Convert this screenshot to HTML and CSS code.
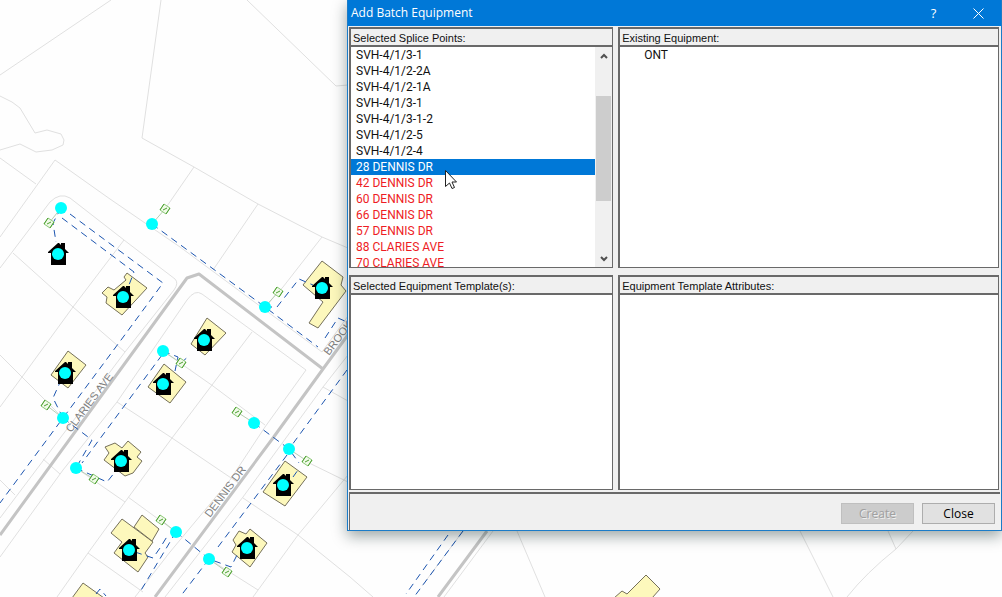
FILE: index.html
```html
<!DOCTYPE html>
<html lang="en">
<head>
<meta charset="utf-8">
<title>Add Batch Equipment</title>
<link rel="stylesheet" href="styles.css">
</head>
<body>
<main class="desktop">
<svg class="map" viewBox="0 0 1002 597" preserveAspectRatio="xMinYMin slice" role="img" aria-label="Street map">
  <defs>
    <g id="home">
      <path class="home-body" d="M0-11 1-11 3-9V-11H7V-5L11-1H8V11H-7V-1H-10V-2Z"/>
      <circle class="node" r="6"/>
    </g>
    <circle id="node" class="node" r="6"/>
    <g id="tap" class="tap">
      <path d="M-1-5 5-1 1 5-5 1Z"/>
      <path class="tap-bar" d="M-1-5-5 1M5-1 1 5M-2 1 2-1"/>
    </g>
  </defs>

  <g class="parcels">
    <path d="M0 75 111 0M161 0 142 138 194 167 258 204 322 237 348 248M247 0 336 86 348 85"/>
    <path d="M0 96 12 102 20 108 35 133 47 130 61 134 64 140 63 145 52 150 36 152 20 144 0 150M0 158 36 184"/>
    <path d="M194 167 165 209M0 237 55 160 110 199 180 247 322 352 348 316"/>
    <path d="M0 268 50 202Q60 192 70 198L124 240 175 279Q179 283 174 290L125 352 0 518"/>
    <path d="M13 253 73 307 125 352M124 240 73 307 22 377 0 407M0 355 22 377 63 418"/>
    <path d="M0 557 63 470 117 402 187 300Q195 289 202 294L306 370 265 427 230 480 170 552 135 597"/>
    <path d="M252 332 172 438 125 502 88 553 57 597M117 402 172 438 240 484M163 351 213 386 265 425"/>
    <path d="M76 468 125 502M128 497 176 532M88 553 143 592M43 459 60 474M0 480 15 495"/>
    <path d="M258 204 213 270M322 237 283 287 265 307M348 355 323 387 243 497 165 597M323 387 348 401"/>
    <path d="M243 498 298 535 350 577 373 597M348 475 298 535 253 597M209 559 258 590M303 460 348 482"/>
    <path d="M517 531 545 597M800 531 833 597M888 531 896 549M913 531 896 549Q866 573 847 597M493 531 444 597M463 531 422 586"/>
  </g>

  <g class="roads">
    <path d="M0 535 187 278 199 274 323 369"/>
    <path d="M155 597 273 438 323 369 350 332M487 531 438 597"/>
  </g>

  <g class="buildings">
    <path d="M127 273 147 288 122 315 106 303 107 297 102 293 108 287 114 290 126 280 124 277Z"/>
    <path d="M322 261 343 277 341 285 346 291 318 328 309 323 323 302 303 285Z"/>
    <path d="M207 318 226 333 205 355 191 344Z"/>
    <path d="M68 351 86 365 68 388 51 375Z"/>
    <path d="M164 364 186 382 170 403 148 387Z"/>
    <path d="M128 441 141 452 137 457 142 461 133 473 125 476 104 460 109 453 105 447 115 443 122 448Z"/>
    <path d="M122 519 153 542 145 553 148 557 138 572 114 553 122 542 111 533Z"/>
    <path d="M142 515 159 529 152 541 134 527Z"/>
    <path d="M83 583 104 598 72 598Z"/>
    <path d="M285 461 307 477 285 506 263 492Z"/>
    <path d="M250 529 267 543 250 567 232 552 236 545 233 540 239 531 246 534Z"/>
    <path d="M646 575 660 589 652 598 614 598 622 591 627 594Z"/>
  </g>

  <g class="cables">
    <path d="M70 214 163 283 124 336 63 418 0 503"/>
    <path d="M62 218 134 272 129 285M61 208 53 223 56 242"/>
    <path d="M152 224 265 307 318 347M265 307 277 307 299 279 313 285"/>
    <path d="M325 338 338 318 347 322"/>
    <path d="M162 355 82 463M63 418 92 440 76 468M63 418 53 398 62 378M76 468 107 482 115 472"/>
    <path d="M163 351 178 357 175 371M181 363 190 355"/>
    <path d="M254 423 289 449 299 463M347 370 289 449M287 455 218 547"/>
    <path d="M176 532 209 559 231 567 237 555M209 559 180 597M176 532 140 592M135 552 153 558 160 548 168 535"/>
    <path d="M448 535 406 594M463 531 414 597M293 477 298 470M96 594 100 589 106 596"/>
  </g>

  <g class="drops">
    <path d="M61 208 49 223M152 224 165 209M265 307 278 292M163 351 181 363M63 418 46 405M76 468 94 479M254 423 237 412M289 449 307 461M176 532 161 520M209 559 227 572"/>
  </g>

  <g class="streets">
    <text transform="translate(71 433) rotate(-53)">CLARIES AVE</text>
    <text transform="translate(210 518) rotate(-53)">DENNIS DR</text>
    <text transform="translate(329 356) rotate(-53)">BROOK</text>
  </g>

  <use href="#tap" x="49" y="223"/><use href="#tap" x="165" y="209"/>
  <use href="#tap" x="278" y="292"/><use href="#tap" x="181" y="363"/>
  <use href="#tap" x="46" y="405"/><use href="#tap" x="94" y="479"/>
  <use href="#tap" x="237" y="412"/><use href="#tap" x="307" y="461"/>
  <use href="#tap" x="161" y="520"/><use href="#tap" x="227" y="572"/>

  <use href="#home" x="58" y="254"/><use href="#home" x="123" y="297"/>
  <use href="#home" x="322" y="288"/><use href="#home" x="204" y="340"/>
  <use href="#home" x="163" y="384"/><use href="#home" x="65" y="373"/>
  <use href="#home" x="121" y="461"/><use href="#home" x="129" y="550"/>
  <use href="#home" x="283" y="485"/><use href="#home" x="247" y="548"/>

  <use href="#node" x="61" y="208"/><use href="#node" x="152" y="224"/>
  <use href="#node" x="265" y="307"/><use href="#node" x="163" y="351"/>
  <use href="#node" x="63" y="418"/><use href="#node" x="76" y="468"/>
  <use href="#node" x="254" y="423"/><use href="#node" x="289" y="449"/>
  <use href="#node" x="176" y="532"/><use href="#node" x="209" y="559"/>
</svg>

<section class="dialog" role="dialog" aria-labelledby="dialog-title">
  <header class="titlebar">
    <h1 class="title" id="dialog-title">Add Batch Equipment</h1>
    <button class="caption-button" type="button" aria-label="Help">?</button>
    <button class="caption-button" type="button" aria-label="Close window">
      <svg class="cross" viewBox="0 0 11 11" aria-hidden="true"><path d="M.5.5 10.500 10.500M10.500.5.5 10.500"/></svg>
    </button>
  </header>

  <div class="panels">
    <section class="panel">
      <h2 class="panel-title" id="points-title">Selected Splice Points:</h2>
      <div class="scroller">
        <ul class="list" role="listbox" aria-labelledby="points-title" tabindex="0">
          <li class="item" role="option">SVH-4/1/3-1</li>
          <li class="item" role="option">SVH-4/1/2-2A</li>
          <li class="item" role="option">SVH-4/1/2-1A</li>
          <li class="item" role="option">SVH-4/1/3-1</li>
          <li class="item" role="option">SVH-4/1/3-1-2</li>
          <li class="item" role="option">SVH-4/1/2-5</li>
          <li class="item" role="option">SVH-4/1/2-4</li>
          <li class="item item-selected" role="option" aria-selected="true">28 DENNIS DR</li>
          <li class="item item-alert" role="option">42 DENNIS DR</li>
          <li class="item item-alert" role="option">60 DENNIS DR</li>
          <li class="item item-alert" role="option">66 DENNIS DR</li>
          <li class="item item-alert" role="option">57 DENNIS DR</li>
          <li class="item item-alert" role="option">88 CLARIES AVE</li>
          <li class="item item-alert" role="option">70 CLARIES AVE</li>
        </ul>
        <div class="scrollbar">
          <button class="arrow" type="button" aria-label="Scroll up"><svg class="chevron" viewBox="0 0 8 6" aria-hidden="true"><path d="M1 5 4 2 7 5"/></svg></button>
          <div class="track"><div class="thumb"></div></div>
          <button class="arrow" type="button" aria-label="Scroll down"><svg class="chevron" viewBox="0 0 8 6" aria-hidden="true"><path d="M1 1 4 4 7 1"/></svg></button>
        </div>
      </div>
    </section>
    <section class="panel">
      <h2 class="panel-title" id="existing-title">Existing Equipment:</h2>
      <ul class="list list-tree" role="listbox" aria-labelledby="existing-title" tabindex="0">
        <li class="item" role="option">ONT</li>
      </ul>
    </section>
    <section class="panel">
      <h2 class="panel-title">Selected Equipment Template(s):</h2>
      <div class="list"></div>
    </section>
    <section class="panel">
      <h2 class="panel-title">Equipment Template Attributes:</h2>
      <div class="list"></div>
    </section>
  </div>

  <footer class="actions">
    <button class="button" type="button" disabled>Create</button>
    <button class="button" type="button">Close</button>
  </footer>
</section>

<svg class="cursor" viewBox="0 0 12 19" aria-hidden="true"><path d="M.5.5V16.500L4.500 13 7 18.500 9.500 17.500 7 12H11.500Z"/></svg>
</main>
</body>
</html>
```

FILE: styles.css
```css
* {
  box-sizing: border-box;
}

body {
  margin: 0;
  font-family: Roboto, "Liberation Sans", sans-serif;
  font-size: 12px;
  line-height: 16px;
  color: #111;
}

.desktop {
  position: relative;
  height: 100vh;
  overflow: hidden;
  background: #fefefe;
}

/* Map */
.map {
  display: block;
  width: 100%;
  height: 100%;
}

.parcels,
.roads,
.cables,
.drops {
  fill: none;
}

.parcels {
  stroke: #e0e0e0;
}

.roads {
  stroke: #c4c4c4;
  stroke-width: 3px;
  stroke-linejoin: round;
}

.buildings {
  fill: #fdf8bc;
  stroke: #75705a;
}

.cables {
  stroke: #1c55b0;
  stroke-dasharray: 7 5;
}

.drops {
  stroke: #b9cdb4;
}

.streets {
  fill: #808080;
  font: 11px "Liberation Sans", sans-serif;
}

.home-body {
  fill: #000;
}

.node {
  fill: #00ffff;
}

.tap {
  fill: #f0fae8;
  stroke: #8cc878;
}

.tap-bar {
  stroke: #4ca030;
}

/* Dialog */
.dialog {
  position: absolute;
  top: 0;
  right: 0;
  left: 347px;
  border: 1px solid #1b7cc8;
  border-top: 0;
  background: #f0f0f0;
  box-shadow: 0 5px 14px rgba(0, 30, 30, 0.4);
}

.titlebar {
  display: flex;
  align-items: center;
  height: 26px;
  background: #0078d7;
  color: #fff;
}

.title {
  flex: 1;
  margin: 0;
  padding-left: 3px;
  font: 12px/26px "Open Sans", sans-serif;
}

.caption-button {
  display: grid;
  place-items: center;
  width: 45px;
  height: 26px;
  padding: 0;
  border: 0;
  background: transparent;
  color: inherit;
  font: 13px "Open Sans", sans-serif;
}

.cross {
  width: 11px;
  height: 11px;
  fill: none;
  stroke: #fff;
}

.panels {
  display: grid;
  grid-template-columns: 265fr 382fr;
  grid-template-rows: 241px 215px;
  gap: 7px 5px;
  padding: 1px 2px 0 1px;
}

.panel {
  display: flex;
  flex-direction: column;
  min-width: 0;
  border: solid #696969;
  border-width: 2px 1px 1px 2px;
  background: #fff;
}

.panel-title {
  height: 18px;
  margin: 0;
  padding: 0 2px;
  border-bottom: 2px solid #696969;
  background: #f0f0f0;
  font: 11px/18px "Liberation Sans", sans-serif;
}

.scroller {
  display: flex;
  flex: 1;
  min-height: 0;
}

.list {
  flex: 1;
  margin: 0;
  padding: 0;
  overflow: hidden;
  list-style: none;
  outline: 0;
}

.item {
  padding-left: 5px;
}

.list-tree .item {
  padding-left: 24px;
}

.item-selected {
  background: #0078d7;
  color: #fff;
}

.item-alert {
  color: #ee1c24;
}

.scrollbar {
  display: flex;
  flex-direction: column;
  width: 17px;
  padding: 0 1px;
  background: #f0f0f0;
}

.arrow {
  display: grid;
  place-items: center;
  height: 17px;
  padding: 0;
  border: 0;
  background: transparent;
}

.chevron {
  width: 8px;
  height: 6px;
  fill: none;
  stroke: #505050;
  stroke-width: 2px;
}

.track {
  flex: 1;
  padding-top: 32px;
}

.thumb {
  height: 105px;
  background: #cdcdcd;
}

.actions {
  display: flex;
  justify-content: flex-end;
  gap: 8px;
  margin: 2px 1px 0;
  padding: 9px 5px 6px;
  border-top: 2px solid #696969;
  border-left: 1px solid #696969;
}

.button {
  width: 73px;
  height: 21px;
  padding: 0;
  border: 1px solid #adadad;
  background: #e1e1e1;
  color: #000;
  font: 12px "Open Sans", sans-serif;
}

.button:disabled {
  border-color: #bfbfbf;
  background: #ccc;
  color: #a0a0a0;
  text-shadow: 1px 1px #eee;
}

.cursor {
  position: absolute;
  top: 170px;
  left: 445px;
  width: 12px;
  height: 19px;
  fill: #fff;
  stroke: #222;
}
```
